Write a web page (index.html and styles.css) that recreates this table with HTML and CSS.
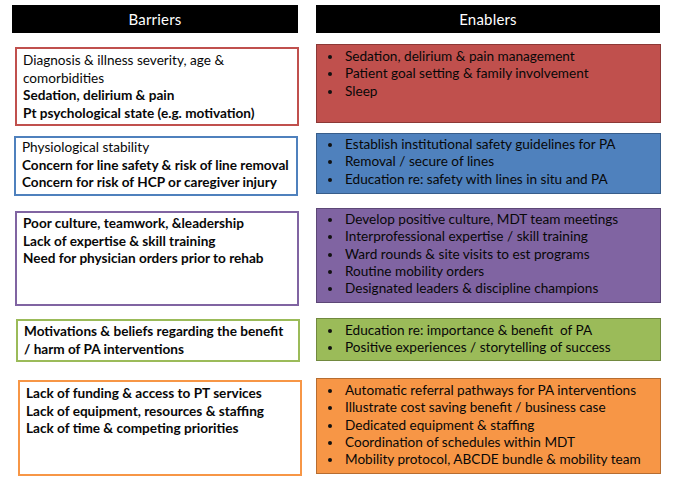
FILE: index.html
```html
<!DOCTYPE html>
<html>
<head>
<meta charset="utf-8">
<link rel="stylesheet" href="styles.css">
</head>
<body>
<div class="page">
  <div class="row head-row">
    <div class="head head-left">Barriers</div>
    <div class="head head-right">Enablers</div>
  </div>

  <div class="row r1">
    <div class="bar bar-red">
      <div>Diagnosis &amp; illness severity, age &amp; comorbidities</div>
      <div class="b">Sedation, delirium &amp; pain</div>
      <div class="b">Pt psychological state (e.g. motivation)</div>
    </div>
    <ul class="en en-red">
      <li>Sedation, delirium &amp; pain management</li>
      <li>Patient goal setting &amp; family involvement</li>
      <li>Sleep</li>
    </ul>
  </div>

  <div class="row r2">
    <div class="bar bar-blue">
      <div>Physiological stability</div>
      <div class="b">Concern for line safety &amp; risk of line removal</div>
      <div class="b">Concern for risk of HCP or caregiver injury</div>
    </div>
    <ul class="en en-blue">
      <li>Establish institutional safety guidelines for PA</li>
      <li>Removal / secure of lines</li>
      <li>Education re: safety with lines in situ and PA</li>
    </ul>
  </div>

  <div class="row r3">
    <div class="bar bar-purple">
      <div class="b">Poor culture, teamwork, &amp;leadership</div>
      <div class="b">Lack of expertise &amp; skill training</div>
      <div class="b">Need for physician orders prior to rehab</div>
    </div>
    <ul class="en en-purple">
      <li>Develop positive culture, MDT team meetings</li>
      <li>Interprofessional expertise / skill training</li>
      <li>Ward rounds &amp; site visits to est programs</li>
      <li>Routine mobility orders</li>
      <li>Designated leaders &amp; discipline champions</li>
    </ul>
  </div>

  <div class="row r4">
    <div class="bar bar-green">
      <div class="b">Motivations &amp; beliefs regarding the benefit<br>/ harm of PA interventions</div>
    </div>
    <ul class="en en-green">
      <li>Education re: importance &amp; benefit&nbsp; of PA</li>
      <li>Positive experiences / storytelling of success</li>
    </ul>
  </div>

  <div class="row r5">
    <div class="bar bar-orange">
      <div class="b">Lack of funding &amp; access to PT services</div>
      <div class="b">Lack of equipment, resources &amp; staffing</div>
      <div class="b">Lack of time &amp; competing priorities</div>
    </div>
    <ul class="en en-orange">
      <li>Automatic referral pathways for PA interventions</li>
      <li>Illustrate cost saving benefit / business case</li>
      <li>Dedicated equipment &amp; staffing</li>
      <li>Coordination of schedules within MDT</li>
      <li>Mobility protocol, ABCDE bundle &amp; mobility team</li>
    </ul>
  </div>
</div>
</body>
</html>
```

FILE: styles.css
```css
* { box-sizing: border-box; }
html, body { margin: 0; padding: 0; background: #fff; }
body {
  font-family: Lato, "Open Sans", sans-serif;
  font-size: 13.6px;
  color: #080808;
  width: 680px;
  height: 481px;
  overflow: hidden;
}
.page {
  display: flex;
  flex-direction: column;
  padding-top: 5px;
}
.row {
  display: grid;
  align-items: start;
  padding-left: 15px;
  grid-template-columns: 286px 345px;
  column-gap: 15px;
}
.head-row {
  grid-template-columns: 286px 344px;
  column-gap: 18px;
  padding-left: 12px;
}
.head {
  background: #000;
  color: #fff;
  height: 28px;
  display: flex;
  align-items: center;
  justify-content: center;
  font-size: 15px;
  letter-spacing: 0.2px;
}

.r1 { margin-top: 11px; }
.r2 { margin-top: 7px; }
.r3 { margin-top: 12px; }
.r4 { margin-top: 12px; }
.r5 { margin-top: 16px; }

.bar {
  background: #fff;
  border: 2px solid;
  padding: 2px 4px 0 6px;
  line-height: 17.5px;
  width: 284px;
}
.b { font-weight: bold; }

.bar-red { border-color: #c0504d; height: 79px; margin-top: 3px; padding-top: 3px; }
.bar-blue { border-color: #4f81bd; height: 60px; margin-top: 3px; margin-left: -1px; padding-top: 1px; }
.bar-purple { border-color: #8064a2; height: 95px; margin-top: 3px; padding-top: 2px; }
.bar-green { border-color: #9bbb59; height: 43px; margin-top: 1px; margin-left: 1px; padding-top: 2px; }
.bar-orange { border-color: #f79646; height: 96px; margin-top: 2px; margin-left: 3px; padding-top: 3px; }

.en {
  list-style: none;
  margin: 0;
  padding: 3px 0 0 28px;
  border: 1px solid;
  line-height: 17.3px;
}
.en li { position: relative; }
.en li::before {
  content: "";
  position: absolute;
  left: -17px;
  top: 7px;
  width: 4px;
  height: 4px;
  border-radius: 50%;
  background: #111;
}
.en-red { background: #c0504d; border-color: #8c3836; height: 79px; padding-top: 3px; }
.en-blue { background: #4f81bd; border-color: #385d8a; height: 61px; padding-top: 2px; }
.en-purple { background: #8064a2; border-color: #5c4776; height: 95px; padding-top: 2px; }
.en-green { background: #9bbb59; border-color: #71893f; height: 43px; padding-top: 3px; }
.en-orange { background: #f79646; border-color: #b66d31; height: 96px; padding-top: 3px; }
```
